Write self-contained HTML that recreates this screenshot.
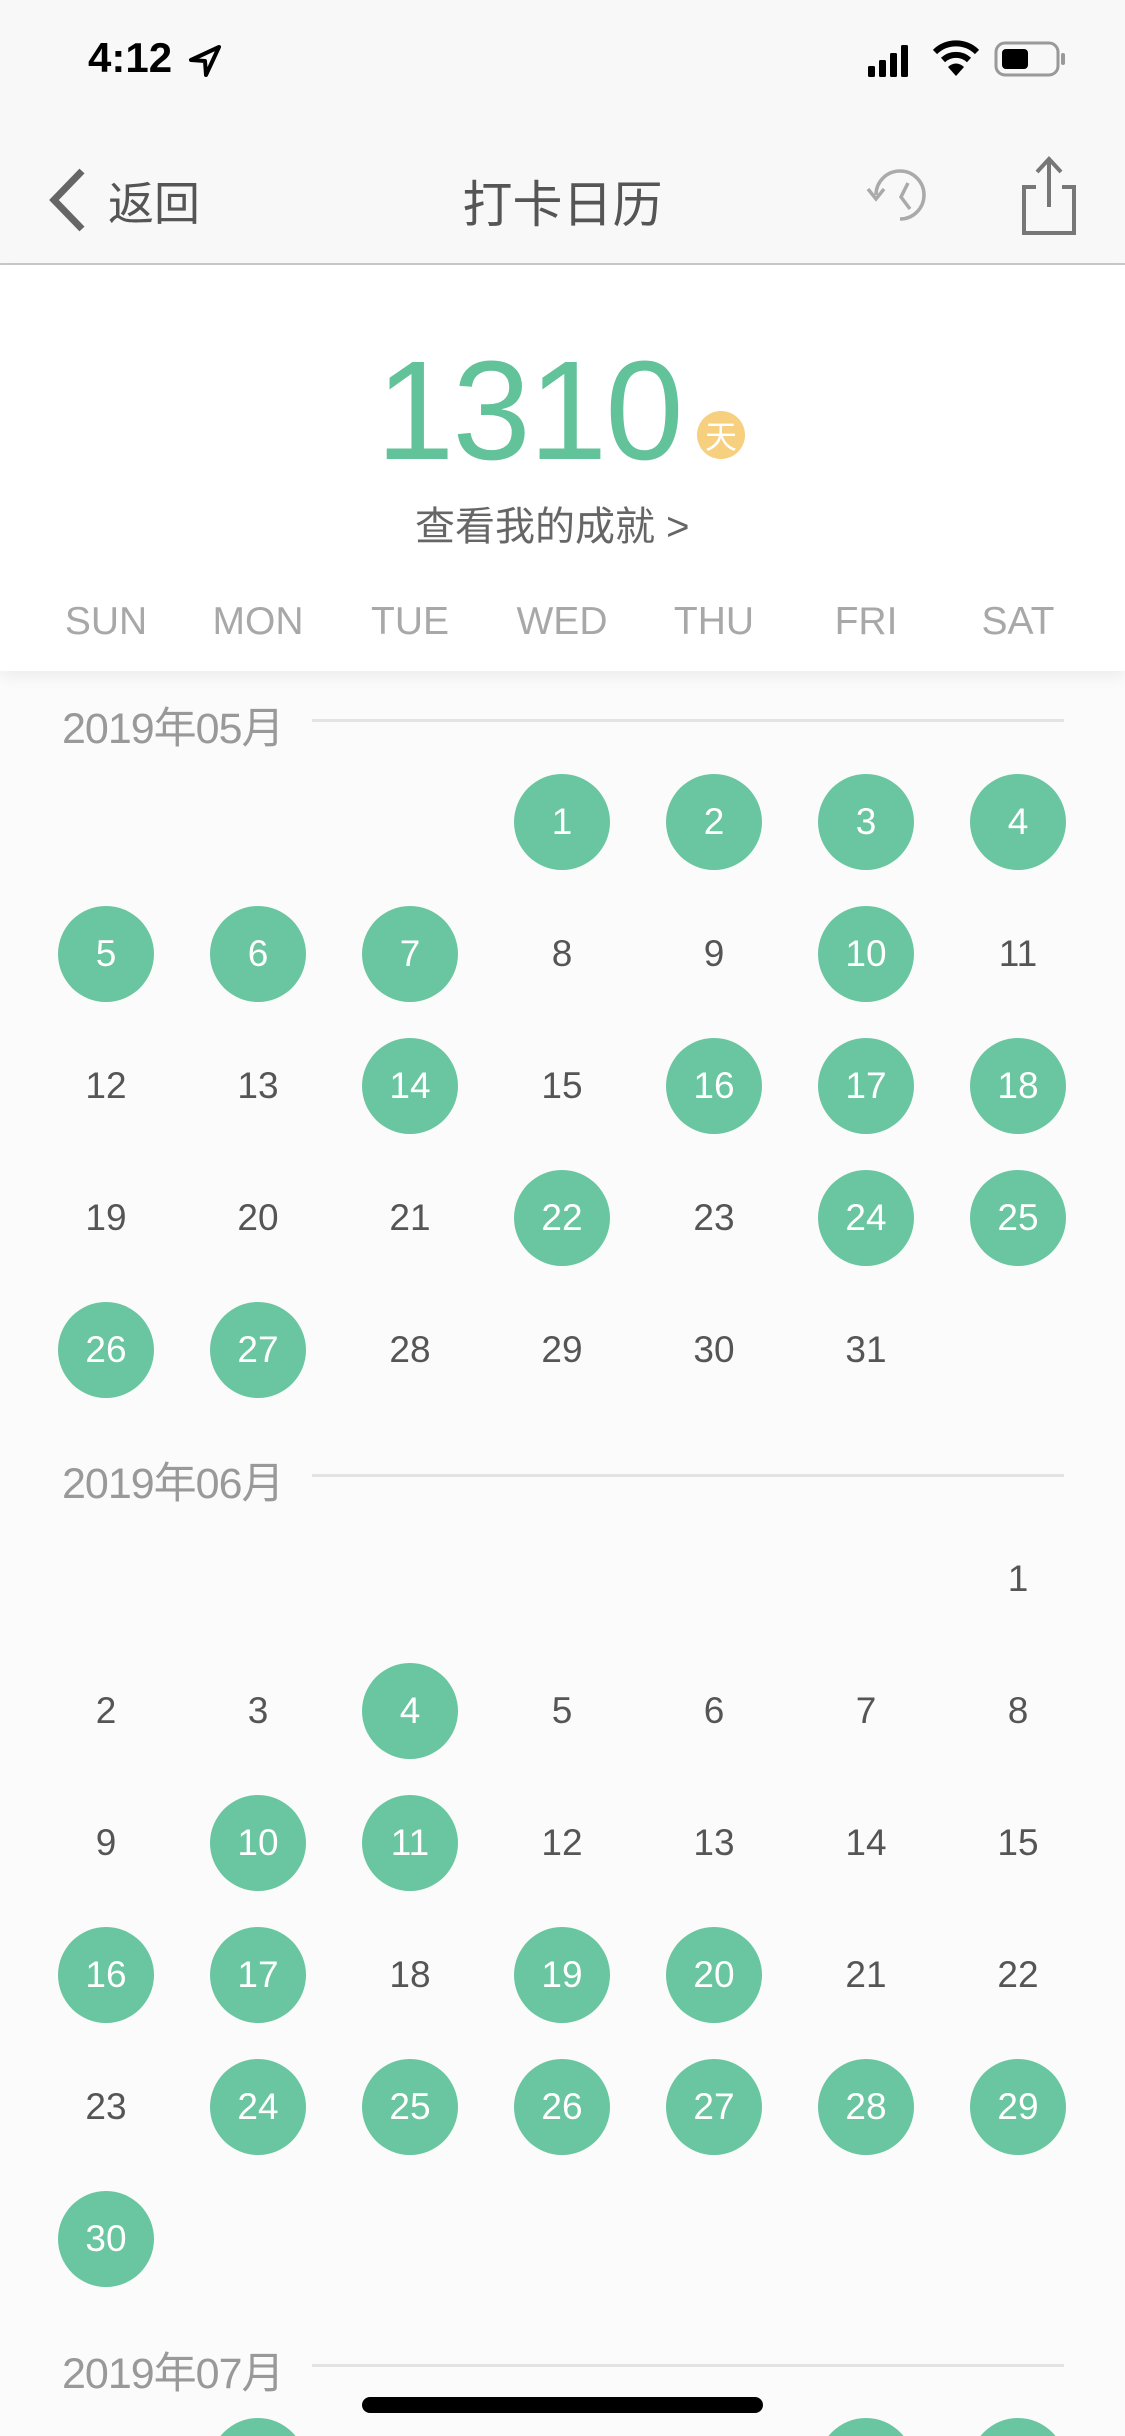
<!DOCTYPE html>
<html><head><meta charset="utf-8"><style>
*{margin:0;padding:0;box-sizing:border-box}
html,body{width:1125px;height:2436px;overflow:hidden}
body{background:#fbfbfb;font-family:"Liberation Sans","Noto Sans CJK SC",sans-serif}
#w{position:relative;width:1125px;height:2436px;overflow:hidden}
.abs{position:absolute}
.top{position:absolute;left:0;top:0;width:1125px;height:265px;background:#f8f8f8;border-bottom:2px solid #c8c8c8}
.head{position:absolute;left:0;top:265px;width:1125px;height:406px;background:#fff;box-shadow:0 6px 14px rgba(0,0,0,0.06)}
.wd{position:absolute;top:600px;width:152px;text-align:center;font-size:39px;color:#a8a8a8}
.mh{position:absolute;left:62px;font-size:43px;color:#999;letter-spacing:-1px}
.ml{position:absolute;left:312px;width:752px;height:3px;background:#e3e3e3}
.grid{position:absolute;left:30px;width:1064px;display:grid;grid-template-columns:repeat(7,152px);grid-auto-rows:132px}
.grid div{display:flex;align-items:center;justify-content:center;font-size:37px;color:#555}
.grid div.c span{width:96px;height:96px;border-radius:50%;background:#69c6a0;color:#fff;display:flex;align-items:center;justify-content:center}
</style></head><body><div id="w">
<div class="top"></div>
<div class="abs" style="left:88px;top:34px;font-size:42px;font-weight:bold;color:#000">4:12</div>
<svg class="abs" style="left:188px;top:44px" width="34" height="34" viewBox="0 0 34 34"><path d="M31 3 L3 16 L17 17 L18 31 Z" fill="none" stroke="#000" stroke-width="4" stroke-linejoin="round"/></svg>
<svg class="abs" style="left:866px;top:42px" width="50" height="36"><rect x="2" y="24" width="7" height="11" rx="1.5"/><rect x="13" y="18" width="7" height="17" rx="1.5"/><rect x="24" y="11" width="7" height="24" rx="1.5"/><rect x="35" y="3" width="7" height="32" rx="1.5"/></svg>
<svg class="abs" style="left:932px;top:40px" width="48" height="38" viewBox="0 0 48 38"><path d="M3 12 A30 30 0 0 1 45 12" fill="none" stroke="#000" stroke-width="6"/><path d="M11 20 A19 19 0 0 1 37 20" fill="none" stroke="#000" stroke-width="6"/><path d="M24 36 L16 27 A11 11 0 0 1 32 27 Z"/></svg>
<svg class="abs" style="left:994px;top:40px" width="74" height="38"><rect x="2" y="3" width="62" height="32" rx="9" fill="none" stroke="#999" stroke-width="3"/><rect x="8" y="9" width="26" height="20" rx="4"/><rect x="67" y="13" width="4" height="12" rx="2" fill="#999"/></svg>
<svg class="abs" style="left:46px;top:168px" width="40" height="64"><path d="M36 3 L8 32 L36 61" fill="none" stroke="#666" stroke-width="7"/></svg>
<div class="abs" style="left:108px;top:168px;font-size:46px;color:#555">返回</div>
<div class="abs" style="left:0;width:1125px;top:165px;text-align:center;font-size:50px;color:#555">打卡日历</div>
<svg class="abs" style="left:864px;top:165px" width="72" height="64" viewBox="0 0 72 64"><path d="M12 30 A24 24 0 1 1 36 54" fill="none" stroke="#aaa" stroke-width="3.5"/><path d="M4 24 L12 34 L20 24" fill="none" stroke="#aaa" stroke-width="3.5"/><path d="M44 18 L37 32 L46 44" fill="none" stroke="#aaa" stroke-width="3.5"/></svg>
<svg class="abs" style="left:1020px;top:155px" width="58" height="82" viewBox="0 0 58 82"><path d="M16 32 H4 V78 H54 V32 H42" fill="none" stroke="#777" stroke-width="4"/><path d="M29 52 V4 M17 17 L29 4 L41 17" fill="none" stroke="#777" stroke-width="4"/></svg>
<div class="head"></div>
<div class="abs" style="left:376px;top:340px;font-size:141px;color:#62c29a;letter-spacing:-2px;line-height:1">1310</div>
<div class="abs" style="left:697px;top:411px;width:48px;height:48px;border-radius:50%;background:#f6cf7f;color:#fff;font-size:32px;display:flex;align-items:center;justify-content:center">天</div>
<div class="abs" style="left:415px;top:494px;font-size:40px;color:#666">查看我的成就 &gt;</div>
<div class="wd" style="left:30px">SUN</div><div class="wd" style="left:182px">MON</div><div class="wd" style="left:334px">TUE</div><div class="wd" style="left:486px">WED</div><div class="wd" style="left:638px">THU</div><div class="wd" style="left:790px">FRI</div><div class="wd" style="left:942px">SAT</div>

<div class="mh" style="top:694px">2019年05月</div><div class="ml" style="top:719px"></div>
<div class="grid" style="top:756px">
<div></div><div></div><div></div><div class="c"><span>1</span></div><div class="c"><span>2</span></div><div class="c"><span>3</span></div><div class="c"><span>4</span></div>
<div class="c"><span>5</span></div><div class="c"><span>6</span></div><div class="c"><span>7</span></div><div>8</div><div>9</div><div class="c"><span>10</span></div><div>11</div>
<div>12</div><div>13</div><div class="c"><span>14</span></div><div>15</div><div class="c"><span>16</span></div><div class="c"><span>17</span></div><div class="c"><span>18</span></div>
<div>19</div><div>20</div><div>21</div><div class="c"><span>22</span></div><div>23</div><div class="c"><span>24</span></div><div class="c"><span>25</span></div>
<div class="c"><span>26</span></div><div class="c"><span>27</span></div><div>28</div><div>29</div><div>30</div><div>31</div><div></div>
</div>

<div class="mh" style="top:1449px">2019年06月</div><div class="ml" style="top:1474px"></div>
<div class="grid" style="top:1513px">
<div></div><div></div><div></div><div></div><div></div><div></div><div>1</div>
<div>2</div><div>3</div><div class="c"><span>4</span></div><div>5</div><div>6</div><div>7</div><div>8</div>
<div>9</div><div class="c"><span>10</span></div><div class="c"><span>11</span></div><div>12</div><div>13</div><div>14</div><div>15</div>
<div class="c"><span>16</span></div><div class="c"><span>17</span></div><div>18</div><div class="c"><span>19</span></div><div class="c"><span>20</span></div><div>21</div><div>22</div>
<div>23</div><div class="c"><span>24</span></div><div class="c"><span>25</span></div><div class="c"><span>26</span></div><div class="c"><span>27</span></div><div class="c"><span>28</span></div><div class="c"><span>29</span></div>
<div class="c"><span>30</span></div><div></div><div></div><div></div><div></div><div></div><div></div>
</div>

<div class="mh" style="top:2339px">2019年07月</div><div class="ml" style="top:2364px"></div>
<div class="grid" style="top:2400px">
<div></div><div class="c"><span>1</span></div><div>2</div><div>3</div><div>4</div><div class="c"><span>5</span></div><div class="c"><span>6</span></div>
</div>
<div class="abs" style="left:362px;top:2397px;width:401px;height:16px;border-radius:8px;background:#000"></div>
</div></body></html>
